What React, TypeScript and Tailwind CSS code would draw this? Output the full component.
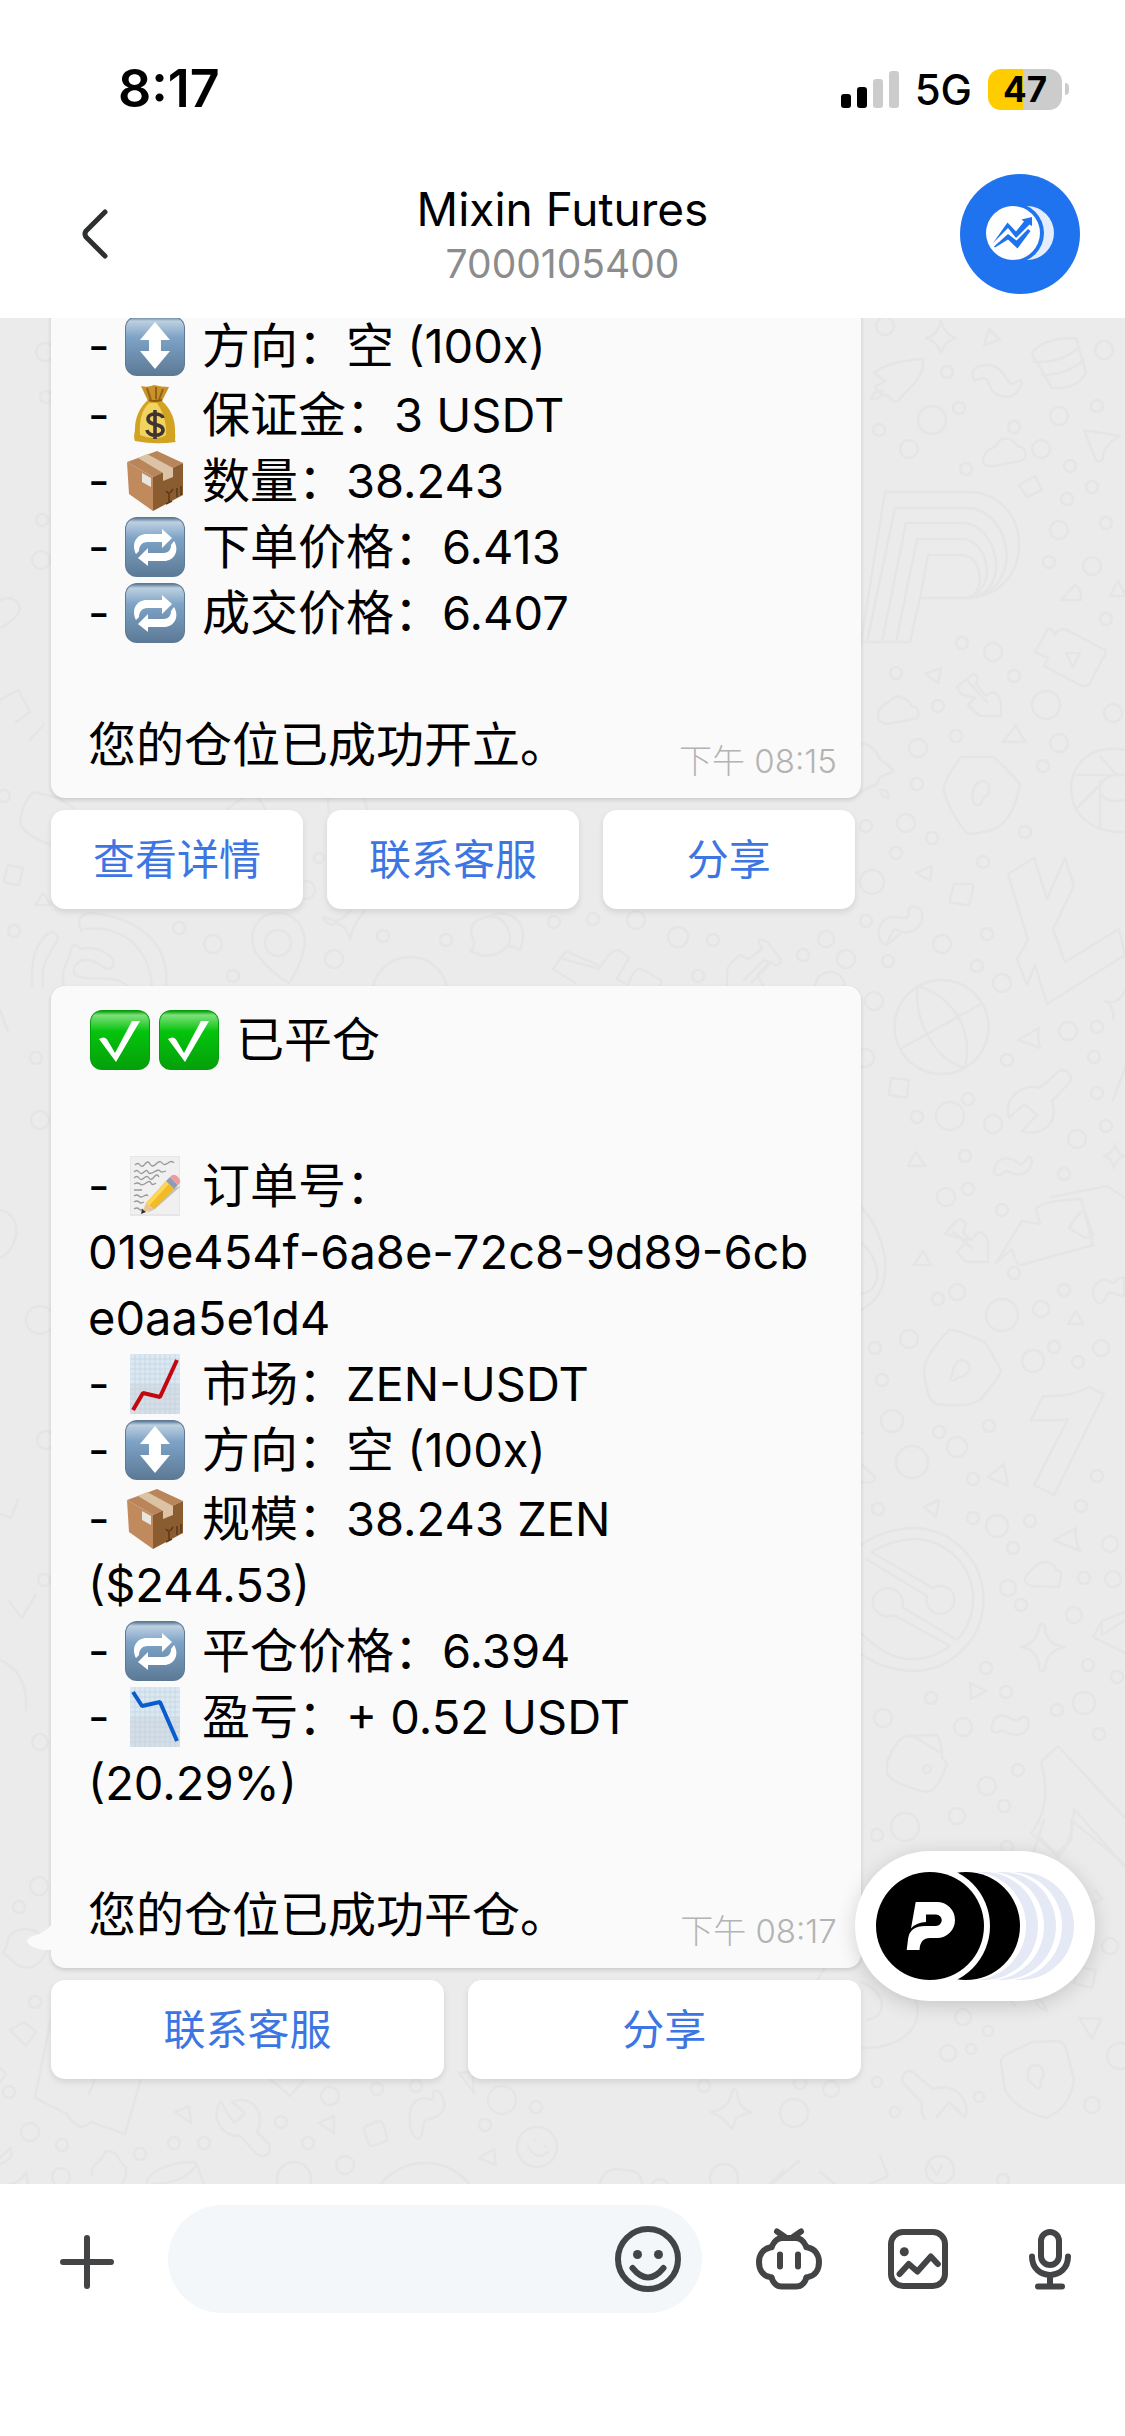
import React from 'react';

type IconName = 'updown' | 'money' | 'box' | 'repeat' | 'check' | 'memo' | 'up' | 'down';

interface Line {
  icon?: IconName;
  label?: string;
  value?: string;
}

const openedLines: Line[] = [
  { icon: 'updown', label: '方向：空', value: ' (100x)' },
  { icon: 'money', label: '保证金：', value: '3 USDT' },
  { icon: 'box', label: '数量：', value: '38.243' },
  { icon: 'repeat', label: '下单价格：', value: '6.413' },
  { icon: 'repeat', label: '成交价格：', value: '6.407' },
];

const closedLines: Line[] = [
  { icon: 'memo', label: '订单号：' },
  { value: '019e454f-6a8e-72c8-9d89-6cb' },
  { value: 'e0aa5e1d4' },
  { icon: 'up', label: '市场：', value: 'ZEN-USDT' },
  { icon: 'updown', label: '方向：空', value: ' (100x)' },
  { icon: 'box', label: '规模：', value: '38.243 ZEN' },
  { value: '($244.53)' },
  { icon: 'repeat', label: '平仓价格：', value: '6.394' },
  { icon: 'down', label: '盈亏：', value: '+ 0.52 USDT' },
  { value: '(20.29%)' },
];

// [cx, cy, r] of the loose circles in the chat wallpaper
const dots = [
  [885, 326, 9], [932, 420, 14], [947, 372, 6], [959, 408, 6], [879, 430, 6], [909, 449, 9], [966, 469, 6],
  [1014, 427, 6], [1041, 449, 9], [1059, 416, 9], [1097, 406, 6], [1104, 350, 9], [1070, 466, 6], [1092, 487, 6],
  [1067, 499, 6], [1059, 530, 9], [1106, 523, 6], [1092, 566, 9], [1049, 562, 6], [1106, 619, 6], [993, 652, 9],
  [962, 643, 6], [896, 673, 6], [938, 706, 6], [1014, 676, 6], [1046, 705, 14], [1113, 713, 9], [956, 736, 6],
  [918, 748, 9], [1059, 743, 9], [1043, 766, 6], [917, 784, 6], [866, 826, 6], [906, 823, 9], [932, 838, 6],
  [896, 853, 6], [1025, 832, 6], [983, 862, 6], [872, 882, 12], [866, 921, 6], [942, 944, 9], [987, 934, 6],
  [888, 961, 6], [977, 966, 6], [1002, 983, 9], [874, 1001, 9], [1068, 1031, 9], [1097, 1027, 6], [1094, 1057, 6],
  [1007, 1060, 6], [865, 1058, 9], [968, 1099, 6], [950, 1116, 14], [917, 1117, 6], [993, 1124, 9], [1097, 1093, 6],
  [1106, 1126, 6], [1077, 1139, 9], [965, 1156, 6], [1064, 1174, 6], [968, 1189, 6], [946, 1197, 9], [1002, 1210, 6],
  [1014, 1273, 6], [957, 1292, 8], [938, 1299, 6], [1002, 1315, 16], [1041, 1309, 8], [1064, 1290, 6], [909, 1339, 9],
  [875, 1348, 6], [1033, 1361, 11], [1054, 1347, 6], [1078, 1362, 6], [1101, 1348, 8], [882, 1380, 6], [892, 1421, 11],
  [939, 1432, 6], [989, 1426, 6], [957, 1447, 10], [912, 1462, 16], [973, 1479, 6], [1097, 1476, 6], [878, 1509, 6],
  [1081, 1506, 6], [973, 1518, 6], [997, 1526, 11], [1030, 1521, 6], [1013, 1548, 6], [1110, 1544, 8], [1008, 1588, 8],
  [1021, 1605, 6], [1084, 1578, 6], [1113, 1579, 8], [1074, 1615, 8], [986, 1668, 6], [1088, 1665, 6], [1117, 1677, 6],
  [931, 1698, 6], [1006, 1692, 6], [1084, 1703, 11], [1057, 1710, 6], [1099, 1734, 6], [883, 1718, 9], [963, 1727, 9],
  [1018, 1770, 6], [987, 1786, 9], [1004, 1806, 6], [957, 1816, 8], [905, 1827, 14], [877, 1835, 6], [1007, 1847, 6],
  [963, 2017, 8], [988, 2031, 5], [971, 2049, 5], [948, 2053, 8], [877, 2082, 5], [979, 2097, 5], [1092, 2105, 8],
  [895, 2112, 5], [1110, 1946, 8], [1120, 2056, 13], [831, 2089, 8], [800, 2083, 6], [704, 2086, 6], [794, 2113, 14],
  [593, 919, 6], [636, 920, 9], [678, 937, 10], [713, 940, 6], [698, 976, 6], [803, 955, 6], [826, 939, 8],
  [846, 959, 9], [830, 987, 15], [14, 931, 6], [179, 928, 6], [213, 944, 9], [233, 976, 6], [334, 959, 9],
  [383, 936, 6], [446, 940, 6], [554, 922, 6], [410, 995, 38], [319, 858, 5], [4, 796, 6], [306, 890, 9],
  [39, 1886, 9], [19, 1907, 6], [35, 2002, 6], [9, 2092, 6], [30, 2132, 9], [62, 2145, 6], [140, 2154, 6],
  [174, 2143, 6], [204, 2143, 6], [281, 2122, 6], [308, 2143, 6], [330, 2096, 9], [345, 2165, 9], [377, 2089, 6],
  [416, 2086, 6], [502, 2100, 14], [536, 2107, 6], [485, 2125, 6], [537, 2147, 20], [61, 2177, 9], [294, 2179, 17],
  [425, 2220, 57], [724, 2178, 14], [660, 2187, 8], [1003, 2180, 6], [940, 2170, 14], [45, 352, 9], [46, 397, 6],
  [42, 520, 6], [41, 560, 9], [36, 1058, 6], [40, 1120, 9], [40, 1320, 14], [46, 1440, 9], [44, 1580, 6], [40, 1742, 8],
];

const doodles = [
  // rocket and small triangles on the first screen
  'M874 373q15-12 49-14q3 16-20 36q-6 9-10 6l-6-6h-6l-6-8q6-4 10-6ZM871 399q3-10 12-8q-2 9-12 8Z',
  'M926 338q12-3 15-17q4 14 15 17q-12 3-15 15q-4-12-15-15ZM984 345l5-16l11 11Z',
  'M975 381c-9-12 6-18 18-15c12 2 14 22 22 17c6-5 9-2 5 5c-9 15-28 9-31-4c-2-9-10-6-14-3Z',
  'M1032 354q8-16 44-16l10 35q-8 16-34 15ZM1034 362q28 1 44-14M1042 375q24 0 42-15',
  'M983 459c2-9 8-10 13-13c5-13 20-6 21 0c9 1 12 12 4 15l-27 5c-8 1-12-2-11-7Z',
  'M1084 430l36 6q-16 8-17 22q-2 6-7 2ZM1019 485l16-9l7 14l-15 7Z',
  // layered arch
  'M861 642L885 492H968C1035 492 1038 598 965 598H920L910 642H861',
  'M867 642L895 508H966C1012 508 1026 590 970 598M882 642L906 523H963C996 523 1014 590 970 598M896 642L917 539H962C988 539 1000 590 966 598M920 598L928 555H962C984 555 986 598 965 598',
  'M1061 600l14-15q7 4 6 15ZM1110 596l8-15l8 15ZM925 674l16-6l-3 15ZM1003 742l13-17q4 10 10 17Z',
  'M1035 652l12-22q4-4 8 5q4-8 12-5l38 20q2 4-2 8l-11 21q-3 10-12 6l-36-19l4-8ZM1066 653h14l-7 14Z',
  'M957 687l16-13q7 1 3 10l10 12q9-10 15 6v14h-21l-12-11l7-7l-14-4ZM967 680l20 22',
  'M878 713c1-6 7-9 12-12c8-10 20 0 21 5c8-1 10 12 4 13l-28 5c-7-1-10-5-9-11Z',
  'M861 743q15 3 19 17q8 4 14 11l-14 6l-4 8q-9 2-15 8M880 790q9-2 8 8q-8-1-8-8Z',
  'M961 757h31q4 0 28 27q-8 46-37 48q-18 4-17 0q-13-14-22-40q-1-12 17-35ZM973 801c-2-12 3-20 10-20c8 1 8 14 1 16c-2 3-2 8-5 8q-6 0-6-4Z',
  // camera shutter
  'M1125 750c-30-6-53 10-54 38c0 26 20 45 54 44M1077 775h48M1100 756l16 18M1100 828v-47M1077 808l23-23M1100 788q3-15 25-13M1100 792q5 12 25 8M916 873l16-7l-2 15Z',
  'M954 884h17q3 1 2 5l-3 13q-1 4-4 3l-13-2q-4-1-3-5ZM882 943c-8-12 0-28 14-26c8 2 15 2 12-6c2-7 12-5 14 2c3 14-13 24-25 17c-6-2-6 9-10 13q-3 2-5 0Z',
  // crossed angular coin mark
  'M1008 874l26-16l13 41l18-41l9 28l-21 43l12 33l54-33l6 26l-78 49l-12-39l-8 20l-10-26l11-19Z',
  'M941 980a47 47 0 1 0 1 0ZM918 986c-6 27 15 75 47 82M902 1048l79-44M918 986c35 11 56 43 47 82',
  'M1018 1040l21-12q-2 12 1 20ZM891 1078l18 2l-2 18l-18-3ZM908 1166l8-14l9 14Z',
  'M1009 1118c-6-20 14-36 31-30l19-17c8-3 15 6 10 12l-17 18c8 25-14 36-30 30l15-16l-13-11ZM994 1172c0-13 12-16 20-12c8 8 9 4 14-3c8-2 4 21-14 17c-8-4-9-4-12 0c-3 3-8 0-8-2Z',
  'M1105 1001q12 5 20-10M1105 1001q10 6 8 18M1113 1100l12-32M1104 1156q9-2 11-12q2 10 10 12q-9 2-11 12q-2-10-10-12ZM1052 1197l55-11l18 12',
  'M861 1207c24 24 40 83 0 103M861 1243c18 13 25 47 0 51M914 1265l9-14l8 14Z',
  'M945 1234l12-14q6-2 9 4l-3 9l8 7l7-8q10 2 10 12v18h-22l-9-10l11-12ZM953 1232l19 16',
  'M1022 1221l18 3l-4-15q5-8 45-10l12 46l-72 20q-5 0-9-16l-16 14ZM1069 1228q12-20 16-16l8 23q-1 3-8 3Z',
  'M1094 1297c-4-13 8-21 17-15c7 3 4-7 13-4v18c-5 2-10-6-16-3c-4 10-10 15-14 4ZM1068 1324l8-13l7 13Z',
  'M949 1330q3-2 36 12l16 28q1 4-21 30q-14 8-44 4q-9-4-12-32q0-16 25-42ZM952 1376c2-15 8-19 15-14c8 8-4 16-10 15c-3 8-10 0-5-1Z',
  // angled digit block
  'M1043 1396q26 2 46-9l15 7l-50 101l-20-10l34-66q-8 2-37 1ZM861 1464l14 13q0 8-14 5',
  'M988 1477l16-13l4 22ZM924 1507l15-7l-3 17ZM1054 1540l22-12q-2 10 4 23ZM861 1433h2',
  // dial with two sliders
  'M912 1528a71 71 0 0 1 0 143q-28-1-51-17M912 1528q-28 1-51 17M912 1539a60 60 0 0 1 45 101L902 1607a15 14 0 1 0-8 8L950 1646Q905 1678 861 1633M871 1552Q892 1540 912 1539M871 1552l62 36a14 14 0 1 1-6 8L866 1559',
  'M1025 1578c4-8 8-7 10-12c11-8 20-2 21 4c6 1 6 3 3 17l-27-1c-6-1-8-5-7-8ZM1021 1647q16-3 18-20q3-6 6 0q0 17 20 20q-18 3-20 21q-3 7-6 0q0-18-18-21ZM970 1683l16 8l-15 8Z',
  'M1125 1612l-23 9l-9 16l32 16M1102 1621v14l23-15M992 1731c-1-20 14-16 20-12c8 5 8-6 15-1c7 16-12 21-23 13c-6-2-5 4-12 0Z',
  'M887 1762q10-24 20-26l29-1q5 2 6 22l5 7q-10 29-22 28q-37-10-38-20ZM913 1736l28 17M923 1769a4 4 0 1 0 8 0a4 4 0 1 0-8 0',
  'M1041 1762l17-16l67 72M1041 1762q12 44-10 71l28 23q14-14 15-47l51 58',
  // shield, wrench and blobs under the floating bubble
  'M1032 2042l26-1q6 2 8 7l8 32q-4 28-28 38q-30-8-41-28l-4-28q0-5 6-8ZM1029 2081c-3-10 0-16 8-16c7 2 9 10 4 15l-1 7q-4 3-6-2Z',
  'M903 2083c-3-10 6-16 13-8l17 14c24-8 38 14 32 28l-16-15l-12 15M903 2083l19 20q-2 8 3 16M846 2046c46 9 82-15 69-48M861 1982c24 9 29 34 6 38M815 1984l9-15M711 2112q18-3 21-20q2-6 5 0q2 18 15 20l-15 5q-4 10-5 12q-8-12-21-17',
  'M1078 1967l18 3l-4 18l-18-5ZM1079 2018l22 1l-9 20ZM1015 2006q-8-8 6-8l12-2q10 3 14 15q-10-3-12-12',
  'M1031 1860l13-40M1072 1820l-1 20l-14 14M1038 1834l20 24M1071 1820l54 44M1095 1890l7 9l-8 4',
  // strip between the two messages
  'M560 958l39 11q12-20 20-19l10 8l-12 21l11 6q6-18 14-16l20 12l-5 10M727 985l0-14q0-6 13-16l9 4l13-10q-8-14 5-7l14 18q-2 9-11 2l-13 13l6 10M744 980l20-20q8 3 2 8l-14 14M887 945l12-10',
  'M32 986c-1-34 6-43 15-52c7-5 13 2 10 7c-12 20-16 26-14 45M82 931c-6-8-3-17 8-18c48 4 80 30 76 73M152 986c-3-37-28-61-67-57M64 986c-4-14 3-24 6-32c1-9 6-12 10-5c18-4 38 8 33 17c-5 8-12-2-20-5c-14-4-22 5-18 14c13 8 40-2 52 11',
  'M277 913c19 0 28 15 28 30c-1 14-12 35-16 40q-16-8-33-30c-10-20 2-40 21-40ZM265 943a13 13 0 1 0 26 0a13 13 0 1 0-26 0M323 917l13 4q8-2 14-10M336 921q-3 8-13-2M365 911q-12 12-15 28q-4-14-14-16',
  'M488 917c16-8 35-1 35 19q-1 10-3 14q-8-4-12-4q-14 14-30 8l-8-3q5-3 4-10q-10-20 14-24ZM488 917c18-2 26 18 20 29M600 966l-34-15l-13 18l22 14M20 823q2-22 14-31l24 6l16 10M20 823q4 12 31 22M4 880l4-15l15 3l-4 17l-13-2ZM35 905l8-12l8 12ZM265 809q-8-18-18-14l-20 14M332 797q-6-8-3 15M368 812l-4-14',
  // left margin
  'M0 1010l8 22M0 1210q18 4 16 26q-5 18-16 22M18 1500l-7 18l-11-4M8 1600l14 18l14-24M0 1660q28 12 26 50M0 700l18-10l12 22l-14 10M0 600q18-6 20 10q-6 12-20 18M30 740l14-16',
  'M3 1953q6-10 5-14c8-16 36-12 40 8q-5 16-16 20q-14 2-20-7ZM52 2013l-17 85l32 16q12 20 24 8l34 12l22-76M95 2079l-6 15M175 2112l14-6l2 17ZM10 2030l14-8l12 10l-10 14ZM0 2068l6 6l-6 8',
  'M221 2101q10 20 14 22l10-10l-13-11c20-8 34 10 25 30l12 12c4 12-8 16-14 8l-15-16c-20 0-30-20-19-35ZM319 2123l15-7v17ZM366 2126l13-5q3 0 5 5l3 12q0 3-3 4l-12 4q-3 0-4-4l-4-12ZM410 2118c-2-14 10-24 20-18c8-2-2-12 8-9c12 12 6 26-9 28c-10 2-2 12-10 20c-6 0-10-10-9-21Z',
  'M459 2073l15-2q-2 12 0 22ZM479 2158l15-9l2 16ZM528 2146q8 16 20 6M534 2140h1M545 2146h1M92 2175c-2-12 10-12 14-24c14 0 12 12 20 16c0 8 0 12-4 17M147 2184c-2-10 20-22 46-22q4 0 5 6l6 16M152 2184q30 0 44-18M0 2158l10-10q6 10-10 16M8 2184q12 0 18-12l2 12M270 2079l20 17l15-17M770 2184l14-14M600 2184q4-18 24-14q18 0 18 14M772 2184l28-24M870 2184l18-8l-8-20M930 2165l7 10l5-10M820 2172l15 12',
];

function Keycap({ top, bottom, edge, children }: { top: string; bottom: string; edge: string; children: React.ReactNode }) {
  const id = React.useId();
  return (
    <>
      <defs>
        <linearGradient id={id} x1="0" y1="0" x2="0" y2="1">
          <stop offset="0" stopColor={edge} />
          <stop offset=".07" stopColor={top} />
          <stop offset=".35" stopColor={bottom} />
          <stop offset="1" stopColor={edge} />
        </linearGradient>
      </defs>
      <rect width="60" height="60" rx="12" fill={edge} />
      <rect x="1" y="1" width="58" height="58" rx="11" fill={`url(#${id})`} />
      {children}
    </>
  );
}

function Graph({ d, color }: { d: string; color: string }) {
  return (
    <>
      <rect x="5" y="0" width="50" height="60" fill="#d3dee7" />
      <rect x="5" y="0" width="50" height="30" fill="#d9e8f3" />
      <path
        d="M10 0v60M15 0v60M20 0v60M25 0v60M30 0v60M35 0v60M40 0v60M45 0v60M50 0v60M5 5h50M5 10h50M5 15h50M5 20h50M5 25h50M5 30h50M5 35h50M5 40h50M5 45h50M5 50h50M5 55h50"
        stroke="#c4d1dc"
        strokeWidth=".7"
      />
      <path d={d} fill="none" stroke={color} strokeWidth="4" strokeLinejoin="bevel" />
    </>
  );
}

function Emoji({ name }: { name: IconName }) {
  return (
    <svg viewBox="0 0 60 60" className="size-[60px] shrink-0" aria-hidden="true">
      {name === 'updown' && (
        <Keycap top="#bdd0e0" bottom="#7ea3c6" edge="#5c7a96">
          <path d="M30 6L45 24H36V35H45L30 53L15 35H24V24H15Z" fill="#fff" />
        </Keycap>
      )}
      {name === 'repeat' && (
        <Keycap top="#bdd0e0" bottom="#7ea3c6" edge="#5c7a96">
          <path
            d="M11 37C6 27 11 17 22 17H37V12L47 21L37 31V25H23C16 25 14 30 14 34ZM49 24C55 34 49 44 39 44H23V49L13 41L23 31V36H38C45 36 46 31 46 28Z"
            fill="#fff"
          />
        </Keycap>
      )}
      {name === 'check' && (
        <Keycap top="#7fe07c" bottom="#04c40c" edge="#04a00a">
          <path d="M9 29Q15 25 18 31L25 43L42 11H50L26 52Z" fill="#fff" />
        </Keycap>
      )}
      {name === 'money' && (
        <>
          <path d="M16 1Q23 3 29 0Q36 2 44 2L37 16H23Z" fill="#c8912a" />
          <path d="M22 3L26 15M31 2V15M38 4L34 15" stroke="#936315" strokeWidth="2" />
          <path d="M23 15Q30 13 37 16C45 23 51 34 50 48C51 52 49 55 51 57Q30 60 10 56C8 51 10 48 10 44C10 32 15 22 23 15Z" fill="#d2a322" />
          <path d="M24 18C17 25 14 34 15 50C24 54 37 54 41 50C42 35 36 24 32 18Z" fill="#f1d45f" />
          <path d="M24 15Q30 17 37 15" stroke="#8a5c12" strokeWidth="2" fill="none" />
          <path d="M38 33C37 28 23 27 23 34C23 41 38 38 38 45C38 52 23 52 22 45M30 25V54" stroke="#3f3433" strokeWidth="3.6" fill="none" />
        </>
      )}
      {name === 'box' && (
        <>
          <path d="M2 11L32 0L58 12L28 26Z" fill="#b9855a" />
          <path d="M2 11L28 26V60L4 43Z" fill="#c08a5c" />
          <path d="M28 26L58 12V44L28 60Z" fill="#8b5c30" />
          <path d="M13 7L22 3L48 17V26L38 30V22Z" fill="#dcc3a6" />
          <path d="M17 22L26 27V36L17 31Z" fill="#e9e5df" />
          <path d="M41 40Q44 45 48 38M44 43V51M41 53L47 50M52 37V46M56 35V44" stroke="#5c3a1a" strokeWidth="1.6" fill="none" />
        </>
      )}
      {name === 'memo' && (
        <>
          <rect x="5" y="0" width="50" height="60" fill="#e6e6e6" />
          <rect x="6" y="1" width="48" height="57" fill="#f0f0f0" />
          <path
            d="M10 9q3-3 5 0t5-1t5 0t6 0t6-1t6 0t6 0M9 16q3-3 5 0t5 0t4 0t6 0t6-1t6 0M9 22q3-3 5 0t5 0t5 0t5-1t5 0M9 28q4-2 6 0t6-1t5 0t5 0M9 34h8M9 40q3-2 5 0t5 0t4 0M9 46q3-2 5 0t5 0M9 53q3-2 5 0t4 0"
            stroke="#999"
            strokeWidth="1.3"
            fill="none"
          />
          <path d="M22 57L46 33L56 30L30 53Z" fill="#00000033" />
          <path d="M21 47L41 25L49 33L29 53Z" fill="#f5b921" />
          <path d="M21 47L41 25L44 28L23 51Z" fill="#fbd65b" />
          <path d="M41 25L45 21L53 29L49 33Z" fill="#8f9cb4" />
          <path d="M45 21Q48 17 52 20Q58 25 53 29Z" fill="#f09aa0" />
          <path d="M21 47L29 53L17 57Z" fill="#eac690" />
          <path d="M17 53L21 56L16 58Z" fill="#333" />
        </>
      )}
      {name === 'up' && <Graph color="#c4060e" d="M8 56L18 39L35 43L52 6" />}
      {name === 'down' && <Graph color="#0a5ccc" d="M8 5L17 19L35 15L52 54" />}
    </svg>
  );
}

function MessageLine({ line }: { line: Line }) {
  if (!line.icon) return <p>{line.value}</p>;
  return (
    <p className={`flex items-center whitespace-pre ${line.icon === 'updown' ? 'pb-[3px]' : ''}`}>
      <span className="w-[37px]">-</span>
      <Emoji name={line.icon} />
      <span className="ml-[17px] text-[48px]">{line.label}</span>
      <span>{line.value}</span>
    </p>
  );
}

function MessageFooter({ text, time }: { text: string; time: string }) {
  return (
    <div className="flex items-end justify-between">
      <p className="text-[48px]">{text}</p>
      <time className="text-[33px] leading-[34px] font-light text-[#b3b3b3]">{time}</time>
    </div>
  );
}

function ActionButton({ label }: { label: string }) {
  return (
    <button className="h-[99px] rounded-[14px] bg-white text-[42px] text-[#3d75e3] shadow-[0_3px_6px_rgba(0,0,0,0.1)]">
      {label}
    </button>
  );
}

function Wallpaper() {
  return (
    <svg
      viewBox="0 318 1125 1866"
      preserveAspectRatio="xMidYMin slice"
      className="absolute inset-0 -z-10 size-full"
      fill="none"
      stroke="#e5e5e5"
      strokeWidth="2.5"
      strokeLinejoin="round"
      strokeLinecap="round"
      aria-hidden="true"
    >
      {dots.map(([cx, cy, r], i) => (
        <circle key={i} cx={cx} cy={cy} r={r} />
      ))}
      {doodles.map((d, i) => (
        <path key={i} d={d} />
      ))}
    </svg>
  );
}

function StatusBar() {
  return (
    <div className="flex h-[150px] items-center justify-between pt-7 pr-14 pl-[118px]">
      <span className="text-[52px] font-semibold">8:17</span>
      <div className="flex items-center">
        <svg viewBox="0 0 58 38" className="h-[38px] w-[58px]" aria-hidden="true">
          <rect x="0" y="24" width="10" height="14" rx="3" />
          <rect x="16" y="17" width="10" height="21" rx="3" />
          <rect x="32" y="9" width="10" height="29" rx="3" fill="#ccc" />
          <rect x="48" y="1" width="10" height="37" rx="3" fill="#ccc" />
        </svg>
        <span className="ml-4 text-[42px] font-medium">5G</span>
        <div className="ml-4 flex h-[41px] w-[74px] items-center justify-center rounded-[13px] bg-linear-to-r from-[#ffcc00] from-47% to-[#ccc] to-47% text-[35px] font-bold">
          47
        </div>
        <span className="ml-[3px] h-3 w-1 rounded-r-full bg-[#ccc]" />
      </div>
    </div>
  );
}

function Header() {
  return (
    <header className="relative z-10 bg-white">
      <StatusBar />
      <div className="flex h-[168px] items-center justify-between px-[45px]">
        <div className="w-[120px]">
          <button aria-label="返回" className="flex h-[100px] w-[100px] items-center justify-center">
            <svg viewBox="0 0 26 50" className="h-[50px] w-[26px]" fill="none" stroke="#2e2f31" strokeWidth="5" strokeLinecap="round" strokeLinejoin="round">
              <path d="M23 3L4 22Q2 25 4 28L23 47" />
            </svg>
          </button>
        </div>
        <div className="text-center">
          <h1 className="text-[46px] leading-[60px]">Mixin Futures</h1>
          <p className="text-[39px] leading-[50px] text-[#8c8c8c]">7000105400</p>
        </div>
        <svg viewBox="0 0 120 120" className="size-[120px]" aria-hidden="true">
          <circle cx="60" cy="60" r="60" fill="#2073ee" />
          <circle cx="67" cy="59" r="27" fill="#e4edfb" />
          <circle cx="54" cy="59" r="30" fill="#2073ee" />
          <circle cx="53" cy="59" r="27" fill="#fff" />
          <path d="M33 69L47.500 48.500L56 57.500L64 47.500L61.500 45.500L72 43V52L69.500 50.500L56 64L48 54Z" fill="#2073ee" />
          <path d="M34 72.500L48 60L56.500 66.500L68 55L70.500 57L57.500 74.500L48 65.500L35 73.500Z" fill="#2073ee" />
        </svg>
      </div>
    </header>
  );
}

function FloatingApps() {
  return (
    <button
      aria-label="悬浮窗"
      className="absolute right-[30px] bottom-[183px] h-[150px] w-[240px] rounded-full bg-white shadow-[0_4px_20px_rgba(0,0,0,0.16)]"
    >
      <svg viewBox="0 0 240 150" className="size-full">
        <circle cx="165" cy="75" r="54" fill="#e4e9f5" />
        <circle cx="153" cy="75" r="54" fill="#fff" />
        <circle cx="147" cy="75" r="54" fill="#e4e9f5" />
        <circle cx="135" cy="75" r="54" fill="#fff" />
        <circle cx="129" cy="75" r="54" fill="#e4e9f5" />
        <circle cx="117" cy="75" r="54" fill="#fff" />
        <circle cx="111" cy="75" r="54" />
        <circle cx="75" cy="75" r="60" fill="#fff" />
        <circle cx="75" cy="75" r="54" />
        <path
          d="M60.700 51H82a18 18 0 0 1 0 36H75q-10 0-10.500 12H51.700l1.500-12q2-12 17-12H81a5.700 5.700 0 0 0 0-11.500H71V71q-9 0-15 6.500Z"
          fill="#fff"
        />
      </svg>
    </button>
  );
}

function ToolIcon({ children }: { children: React.ReactNode }) {
  return (
    <svg
      viewBox="0 0 66 66"
      className="size-[66px]"
      fill="none"
      stroke="#434446"
      strokeWidth="6"
      strokeLinecap="round"
      strokeLinejoin="round"
      aria-hidden="true"
    >
      {children}
    </svg>
  );
}

function Composer() {
  return (
    <footer className="flex items-center bg-white pt-[21px] pr-[43px] pb-[123px] pl-[54px]">
      <button aria-label="更多">
        <ToolIcon>
          <path d="M9 36H57M33 12V60" />
        </ToolIcon>
      </button>
      <div className="ml-12 flex h-[108px] min-w-0 flex-1 items-center rounded-full bg-[#f3f7fa] pr-[21px] pl-10">
        <input type="text" aria-label="消息" className="h-full min-w-0 flex-1 bg-transparent text-[46px] outline-none" />
        <button aria-label="表情">
          <ToolIcon>
            <circle cx="33" cy="33" r="30" />
            <path d="M17.500 42Q33 61 48.500 42" />
            <circle cx="22.500" cy="28.500" r="4.500" fill="#434446" stroke="none" />
            <circle cx="43.500" cy="28.500" r="4.500" fill="#434446" stroke="none" />
          </ToolIcon>
        </button>
      </div>
      <div className="ml-[54px] flex gap-16">
        <button aria-label="机器人">
          <ToolIcon>
            <path d="M26 12H40C45 12 48 16 50 20Q50 21.500 52 21.500C59 23 63 29 63 36C63 44 59 50 52 51Q50 51 50 53C48 58 45 60.500 40 60.500H26C21 60.500 18 58 16 53Q16 51 14 51C7 50 3 44 3 36C3 29 7 23 14 21.500Q16 21.500 16 20C18 16 21 12 26 12Z" />
            <path d="M21 5.500L29 11M45 5.500L37 11M24 28.500V40.500M42 28.500V40.500" />
          </ToolIcon>
        </button>
        <button aria-label="图片">
          <ToolIcon>
            <rect x="5" y="6" width="54" height="54" rx="12" />
            <path d="M13.600 48L22.700 38L31.400 45.500L44.800 30.500L51.800 38" />
            <circle cx="18.300" cy="25.700" r="4.500" fill="#434446" stroke="none" />
          </ToolIcon>
        </button>
        <button aria-label="语音">
          <ToolIcon>
            <rect x="25" y="6" width="18" height="33" rx="9" />
            <path d="M16 30.500C16 55 52 55 52 30.500M34 49V60M22 60.500H46" />
          </ToolIcon>
        </button>
      </div>
    </footer>
  );
}

export default function App() {
  return (
    <div className="flex min-h-screen flex-col bg-white font-['Inter','Noto_Sans_CJK_SC',sans-serif] text-black">
      <Header />
      <main className="relative isolate flex-1 bg-[#ebebeb] pb-[104px] pl-[51px]">
        <Wallpaper />

        {/* Position opened, scrolled partly under the header */}
        <section className="-mt-[5px] w-[75.400%]">
          <div className="rounded-b-[14px] bg-[#fafafa] pr-6 pb-5 pl-[37px] text-[47px] leading-[66px] shadow-[0_2px_4px_rgba(0,0,0,0.14)]">
            {openedLines.map((line, i) => (
              <MessageLine key={i} line={line} />
            ))}
            <div className="h-[66px]" />
            <MessageFooter text="您的仓位已成功开立。" time="下午 08:15" />
          </div>
          <div className="mt-3 grid grid-cols-3 gap-6 pr-[6px]">
            <ActionButton label="查看详情" />
            <ActionButton label="联系客服" />
            <ActionButton label="分享" />
          </div>
        </section>

        {/* Position closed */}
        <section className="mt-[77px] w-[75.400%]">
          <div className="relative rounded-[14px] bg-[#fafafa] pt-[21px] pr-6 pb-5 pl-[37px] text-[47px] leading-[66px] shadow-[0_2px_4px_rgba(0,0,0,0.14)]">
            <svg viewBox="0 0 26 28" className="absolute bottom-[17px] -left-6 h-7 w-[26px]" aria-hidden="true">
              <path d="M26 0Q18 10 6 13Q0 15 0 18Q2 25 18 27H26Z" fill="#fafafa" />
            </svg>
            <h2 className="flex items-center gap-[9px] pl-[2px] text-[48px] whitespace-pre">
              <Emoji name="check" />
              <Emoji name="check" />
              <span className="ml-2">已平仓</span>
            </h2>
            <div className="h-[80px]" />
            {closedLines.map((line, i) => (
              <MessageLine key={i} line={line} />
            ))}
            <div className="h-[66px]" />
            <MessageFooter text="您的仓位已成功平仓。" time="下午 08:17" />
          </div>
          <div className="mt-3 grid grid-cols-2 gap-6">
            <ActionButton label="联系客服" />
            <ActionButton label="分享" />
          </div>
        </section>

        <FloatingApps />
      </main>
      <Composer />
    </div>
  );
}
